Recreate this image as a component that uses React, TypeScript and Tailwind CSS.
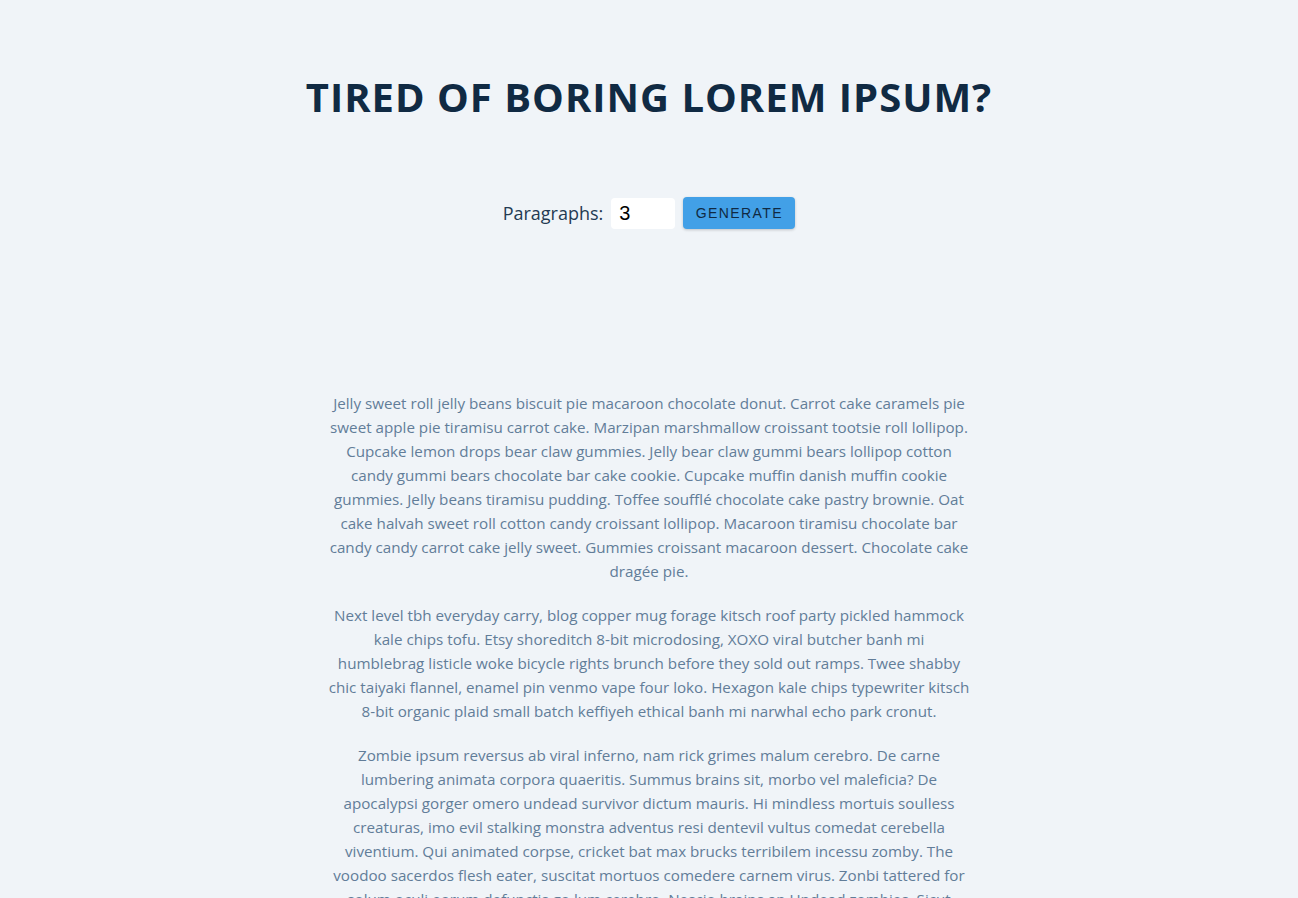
import React from "react";

const paras = [
  "Jelly sweet roll jelly beans biscuit pie macaroon chocolate donut. Carrot cake caramels pie sweet apple pie tiramisu carrot cake. Marzipan marshmallow croissant tootsie roll lollipop. Cupcake lemon drops bear claw gummies. Jelly bear claw gummi bears lollipop cotton candy gummi bears chocolate bar cake cookie. Cupcake muffin danish muffin cookie gummies. Jelly beans tiramisu pudding. Toffee soufflé chocolate cake pastry brownie. Oat cake halvah sweet roll cotton candy croissant lollipop. Macaroon tiramisu chocolate bar candy candy carrot cake jelly sweet. Gummies croissant macaroon dessert. Chocolate cake dragée pie.",
  "Next level tbh everyday carry, blog copper mug forage kitsch roof party pickled hammock kale chips tofu. Etsy shoreditch 8-bit microdosing, XOXO viral butcher banh mi humblebrag\u00a0listicle woke bicycle rights brunch before they sold out ramps. Twee shabby chic taiyaki flannel, enamel pin venmo vape four loko. Hexagon kale chips typewriter kitsch 8-bit organic plaid small batch keffiyeh ethical banh mi narwhal echo park cronut.",
  "Zombie ipsum reversus ab viral inferno, nam rick grimes malum cerebro. De carne lumbering animata corpora quaeritis. Summus brains sit, morbo vel maleficia? De apocalypsi gorger omero undead survivor dictum mauris. Hi mindless mortuis soulless creaturas, imo evil stalking monstra adventus resi dentevil vultus comedat cerebella viventium. Qui animated corpse, cricket bat max brucks terribilem incessu zomby. The voodoo sacerdos flesh eater, suscitat mortuos comedere carnem virus. Zonbi tattered for solum oculi eorum defunctis go lum cerebro. Nescio brains an Undead zombies. Sicut malus putrid voodoo horror. Nigh tofth eliv ingdead.",
];

export default function App() {
  return (
    <div
      className="min-h-[898px] w-full overflow-hidden bg-[#f0f4f8]"
      style={{ fontFamily: '"Open Sans", "Noto Sans", sans-serif' }}
    >
      <section className="mx-auto flex w-[646px] flex-col items-center pt-[67px]">
        <h1 className="whitespace-nowrap text-center text-[40px] font-bold uppercase leading-[60px] tracking-[0.025em] text-[#102a43]">
          Tired of boring lorem ipsum?
        </h1>
        <form className="mt-[70px] flex items-center justify-center gap-2">
          <label className="text-[18px] text-[#243b53]">Paragraphs:</label>
          <input
            type="number"
            defaultValue={3}
            className="h-[31px] w-[64px] rounded-[4px] border-none bg-white px-2 text-[20px] text-black outline-none"
            style={{ fontFamily: '"Liberation Sans", Arial, sans-serif' }}
          />
          <button
            type="button"
            className="h-[32px] w-[112px] rounded-[4px] bg-[#42a0e7] text-[14px] uppercase tracking-[0.1em] text-[#102a43] shadow-[0_1px_3px_rgba(0,0,0,0.2)]"
            style={{ fontFamily: '"Liberation Sans", Arial, sans-serif' }}
          >
            Generate
          </button>
        </form>
        <article className="mt-[162px] w-[646px]">
          {paras.map((p, i) => (
            <p
              key={i}
              className="mb-[20px] text-center text-[15.2px] leading-[24px] text-[#627d98]"
            >
              {p}
            </p>
          ))}
        </article>
      </section>
    </div>
  );
}
